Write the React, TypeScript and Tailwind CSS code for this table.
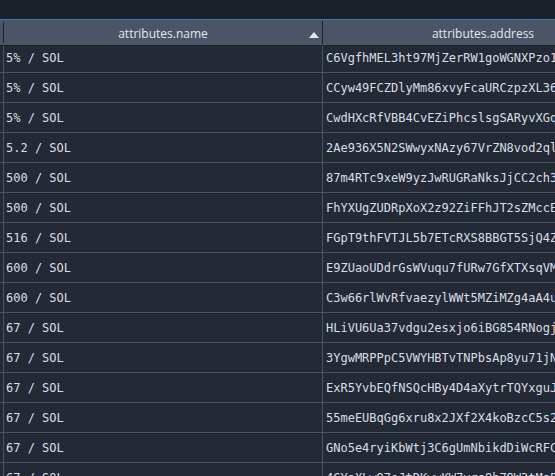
import React from "react";

const rows: [string, string][] = [
  ["5% / SOL", "C6VgfhMEL3ht97MjZerRW1goWGNXPzo1QkR"],
  ["5% / SOL", "CCyw49FCZDlyMm86xvyFcaURCzpzXL36Tnb"],
  ["5% / SOL", "CwdHXcRfVBB4CvEZiPhcslsgSARyvXGqW2p"],
  ["5.2 / SOL", "2Ae936X5N2SWwyxNAzy67VrZN8vod2qlHfz"],
  ["500 / SOL", "87m4RTc9xeW9yzJwRUGRaNksJjCC2ch3ZxA"],
  ["500 / SOL", "FhYXUgZUDRpXoX2z92ZiFFhJT2sZMccEpLq"],
  ["516 / SOL", "FGpT9thFVTJL5b7ETcRXS8BBGT5SjQ4Zc7u"],
  ["600 / SOL", "E9ZUaoUDdrGsWVuqu7fURw7GfXTXsqVMbnd"],
  ["600 / SOL", "C3w66rlWvRfvaezylWWt5MZiMZg4aA4u9Ks"],
  ["67 / SOL", "HLiVU6Ua37vdgu2esxjo6iBG854RNogjY3e"],
  ["67 / SOL", "3YgwMRPPpC5VWYHBTvTNPbsAp8yu71jNx4r"],
  ["67 / SOL", "ExR5YvbEQfNSQcHBy4D4aXytrTQYxguJ8Wm"],
  ["67 / SOL", "55meEUBqGg6xru8x2JXf2X4koBzcC5s2Fvt"],
  ["67 / SOL", "GNo5e4ryiKbWtj3C6gUmNbikdDiWcRFCa2h"],
  ["67 / SOL", "4GYaXLw97eJtDKwwKW7vrs9h79W3tMaP6jk"],
];

export default function App() {
  return (
    <div className="w-[555px] h-[476px] bg-[#1c222c] overflow-hidden flex flex-col">
      <div className="h-[19px] shrink-0 bg-[#1b212b]" />
      <div className="h-px shrink-0 bg-[#3b78b4]" />
      <div
        className="h-[26px] w-[643px] shrink-0 flex bg-[#4a5567] text-[#e3e8ef] text-[12px] border-b border-[#1c222c]"
        style={{ fontFamily: '"Open Sans", "Noto Sans", sans-serif' }}
      >
        <div className="w-[4px] shrink-0 border-r border-[#1c222c] my-[2px]" />
        <div className="w-[319px] shrink-0 relative flex items-center justify-center border-r border-[#1c222c] my-[1px] pt-[2px]">
          <span>attributes.name</span>
          <svg
            className="absolute right-[3px] top-[11px]"
            width="10"
            height="6"
            viewBox="0 0 10 6"
          >
            <polygon points="5,0 10,6 0,6" fill="#e3e8ef" />
          </svg>
        </div>
        <div className="w-[320px] shrink-0 flex items-center justify-center whitespace-nowrap pt-[2px]">
          <span>attributes.address</span>
        </div>
      </div>
      <div className="flex-1 overflow-hidden">
        <div
          className="-mt-[3px] w-[643px] text-[12px] text-[#d8dee7]"
          style={{ fontFamily: '"DejaVu Sans Mono", "Liberation Mono", monospace' }}
        >
          {rows.map(([a, b], i) => (
            <div
              key={i}
              className="h-[30px] flex border-b border-[#4a5362] bg-[#232a35]"
            >
              <div className="w-[4px] shrink-0 border-r border-[#4a5362]" />
              <div className="w-[319px] shrink-0 border-r border-[#4a5362] flex items-center pl-[2px] whitespace-nowrap">
                {a}
              </div>
              <div className="w-[320px] shrink-0 flex items-center pl-[3px] whitespace-nowrap overflow-hidden">
                {b}
              </div>
            </div>
          ))}
        </div>
      </div>
    </div>
  );
}
